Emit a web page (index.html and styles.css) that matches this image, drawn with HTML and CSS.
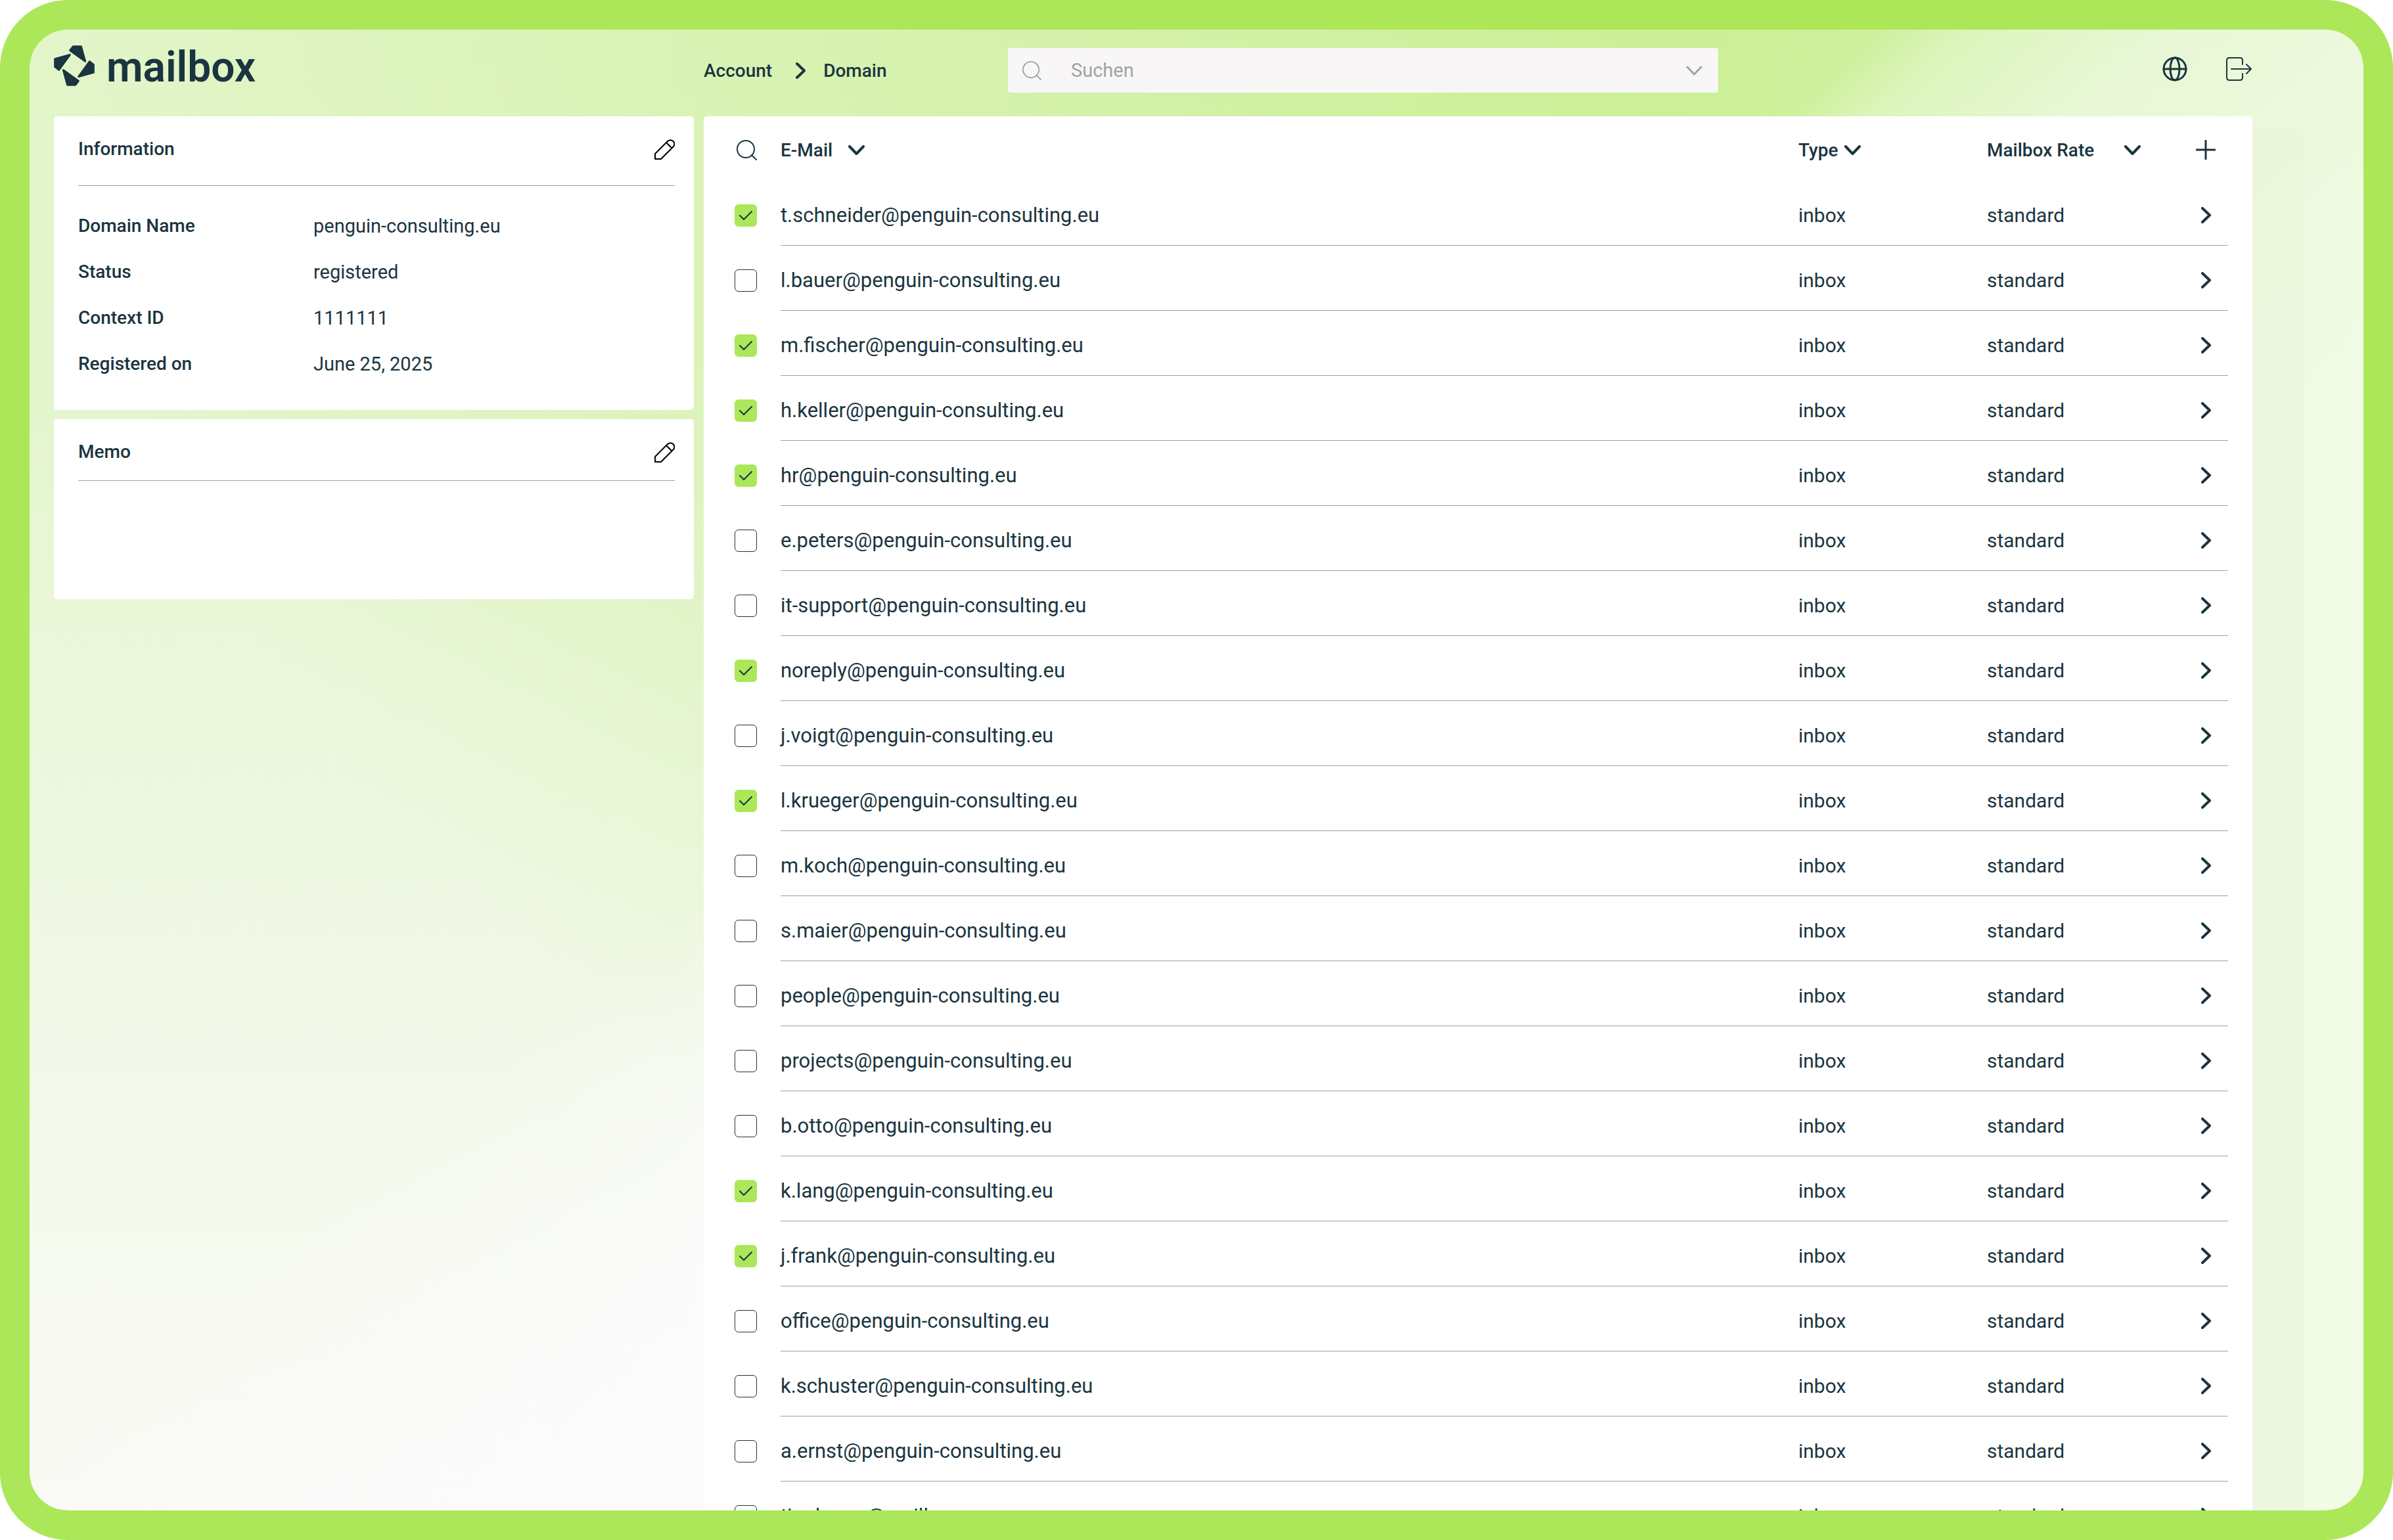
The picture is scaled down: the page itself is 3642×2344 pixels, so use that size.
FILE: index.html
```html
<!DOCTYPE html>
<html lang="de">
<head>
  <meta charset="UTF-8" />
  <meta name="viewport" content="width=device-width, initial-scale=1.0" />
  <title>mailbox - Domain</title>
  <link rel="stylesheet" href="styles.css">
</head>
<body>
  <!-- shared icons -->
  <svg class="sprite" aria-hidden="true">
    <symbol id="i-down" viewBox="0 0 25 15"><path d="M2 2l10.500 11L23 2" /></symbol>
    <symbol id="i-right" viewBox="0 0 16 25"><path d="M2 2l11 10.500L2 23" /></symbol>
    <symbol id="i-search" viewBox="0 0 31 31"><circle cx="14" cy="14" r="13" /><path d="M23 23l7 7" /></symbol>
    <symbol id="i-pencil" viewBox="0 0 31 31"><path d="M1 30v-8L20 3c2.500-2.500 6-2.500 8.500 0s2.500 6 0 8.500L10 30zM18 5l8.500 8.500" /></symbol>
  </svg>

  <div class="frame">
    <header class="topbar">
      <a class="logo" href="#">
        <svg class="logo-mark" viewBox="0 0 186 186" aria-hidden="true">
          <path id="blade" d="M88 5h36l19 68L74 23z" />
          <use href="#blade" transform="rotate(90 93 93)" />
          <use href="#blade" transform="rotate(180 93 93)" />
          <use href="#blade" transform="rotate(270 93 93)" />
        </svg>
        <span>mailbox</span>
      </a>
      <div class="topbar-right">
        <nav class="breadcrumb">
          <a href="#">Account</a>
          <svg class="icon right"><use href="#i-right" /></svg>
          <a href="#">Domain</a>
        </nav>
        <form class="search">
          <svg class="icon glass"><use href="#i-search" /></svg>
          <input type="search" placeholder="Suchen" aria-label="Suchen">
          <button type="button" aria-label="Filter"><svg class="icon down"><use href="#i-down" /></svg></button>
        </form>
        <div class="tools">
          <button type="button" aria-label="Sprache">
            <svg class="icon globe" viewBox="0 0 38 38"><circle cx="19" cy="19" r="17" /><ellipse cx="19" cy="19" rx="7" ry="17" /><path d="M2 19h34" /></svg>
          </button>
          <button type="button" aria-label="Abmelden">
            <svg class="icon logout" viewBox="0 0 40 36"><path d="M25 11V5c0-2.500-1.500-4-4-4H5C2.500 1 1 2.500 1 5v26c0 2.500 1.500 4 4 4h16c2.500 0 4-1.500 4-4v-6" /><path d="M8 18h30M31 11l7 7-7 7" /></svg>
          </button>
        </div>
      </div>
    </header>

    <main class="content">
      <aside class="side">
        <section class="panel info">
          <div class="panel-head">
            <h2>Information</h2>
            <button type="button" aria-label="Information bearbeiten"><svg class="icon pencil"><use href="#i-pencil" /></svg></button>
          </div>
          <dl>
            <dt>Domain Name</dt><dd>penguin-consulting.eu</dd>
            <dt>Status</dt><dd>registered</dd>
            <dt>Context ID</dt><dd>1111111</dd>
            <dt>Registered on</dt><dd>June 25, 2025</dd>
          </dl>
        </section>
        <section class="panel memo">
          <div class="panel-head">
            <h2>Memo</h2>
            <button type="button" aria-label="Memo bearbeiten"><svg class="icon pencil"><use href="#i-pencil" /></svg></button>
          </div>
          <div class="memo-body"></div>
        </section>
      </aside>

      <section class="panel list">
        <table>
          <thead>
            <tr>
              <th class="col-check"><button type="button" aria-label="Suchen"><svg class="icon glass"><use href="#i-search" /></svg></button></th>
              <th><button type="button" class="sort">E-Mail <svg class="icon down"><use href="#i-down" /></svg></button></th>
              <th class="col-type"><button type="button" class="sort tight">Type <svg class="icon down"><use href="#i-down" /></svg></button></th>
              <th class="col-rate"><button type="button" class="sort wide">Mailbox Rate <svg class="icon down"><use href="#i-down" /></svg></button></th>
              <th class="col-open"><button type="button" aria-label="Neue Mailbox"><svg class="icon plus" viewBox="0 0 30 30"><path d="M15 1v28M1 15h28" /></svg></button></th>
            </tr>
          </thead>
          <tbody id="rows"></tbody>
        </table>
      </section>
    </main>
  </div>

  <script>
    const mailboxes = [
      ["t.schneider@penguin-consulting.eu", true],
      ["l.bauer@penguin-consulting.eu", false],
      ["m.fischer@penguin-consulting.eu", true],
      ["h.keller@penguin-consulting.eu", true],
      ["hr@penguin-consulting.eu", true],
      ["e.peters@penguin-consulting.eu", false],
      ["it-support@penguin-consulting.eu", false],
      ["noreply@penguin-consulting.eu", true],
      ["j.voigt@penguin-consulting.eu", false],
      ["l.krueger@penguin-consulting.eu", true],
      ["m.koch@penguin-consulting.eu", false],
      ["s.maier@penguin-consulting.eu", false],
      ["people@penguin-consulting.eu", false],
      ["projects@penguin-consulting.eu", false],
      ["b.otto@penguin-consulting.eu", false],
      ["k.lang@penguin-consulting.eu", true],
      ["j.frank@penguin-consulting.eu", true],
      ["office@penguin-consulting.eu", false],
      ["k.schuster@penguin-consulting.eu", false],
      ["a.ernst@penguin-consulting.eu", false],
      ["tim.bauer@smiller.eu", false]
    ];

    document.getElementById('rows').innerHTML = mailboxes.map(([mail, checked], i) => `
      <tr>
        <td><input type="checkbox" id="box${i}" ${checked ? 'checked' : ''}></td>
        <td class="mail"><label for="box${i}">${mail}</label></td>
        <td>inbox</td>
        <td>standard</td>
        <td class="open"><a href="#" aria-label="${mail}"><svg class="icon right"><use href="#i-right" /></svg></a></td>
      </tr>`).join('');
  </script>
</body>
</html>
```

FILE: styles.css
```css
* {
  margin: 0;
  padding: 0;
  box-sizing: border-box;
}
body {
  font-family: Roboto, sans-serif;
  font-size: 29px;
  color: #1a3540;
  background-color: #fff;
}
a {
  color: inherit;
  text-decoration: none;
}
button {
  display: block;
  background: none;
  border: none;
  font: inherit;
  color: inherit;
  cursor: pointer;
}
.sprite {
  display: none;
}

/* icons */
.icon {
  display: block;
  flex: none;
  fill: none;
  stroke: currentColor;
  stroke-width: 2;
  stroke-linecap: round;
  stroke-linejoin: round;
}
.down {
  width: 25px;
  height: 15px;
  stroke-width: 4;
}
.right {
  width: 16px;
  height: 25px;
  stroke-width: 4;
}
.glass, .pencil {
  width: 31px;
  height: 31px;
}
.pencil {
  color: #000;
}
.globe {
  width: 38px;
  height: 38px;
  stroke-width: 3;
}
.logout {
  width: 40px;
  height: 36px;
}
.plus {
  width: 30px;
  height: 30px;
  stroke-width: 3;
}

.frame {
  height: 100vh;
  overflow: hidden;
  border: 45px solid #abe758;
  border-radius: 103px;
  padding: 0 169px 0 37px;
  background:
    linear-gradient(139deg, transparent 24%, #dcf5bc 27%, #e8f7d5 34%, #eefae0 45%, #f1fbe6 55%) right / 50% 100% no-repeat padding-box,
    linear-gradient(139deg, rgba(251, 251, 252, 0) 58%, #fbfbfc 76%) left / 50% 100% no-repeat padding-box,
    radial-gradient(ellipse 68% 90% at 70% 0%, #cbef96, rgba(203, 239, 150, 0)) padding-box,
    linear-gradient(#e2f5c8, #e4f5cd 25%, #ebf7dc 45%, #f3f9ea 70%, #fafaf5) padding-box,
    #abe758;
}

/* top bar */
.topbar, .content {
  display: grid;
  grid-template-columns: minmax(0, 5fr) minmax(0, 12.1fr);
  column-gap: 15px;
  align-items: start;
}
.topbar {
  padding: 24px 0 36px;
}
.logo {
  display: flex;
  align-items: center;
  gap: 18px;
  height: 62px;
  font-size: 64px;
  font-weight: 600;
}
.logo span {
  padding-top: 4px;
}
.logo-mark {
  width: 62px;
  height: 62px;
  fill: currentColor;
  stroke: currentColor;
  stroke-width: 9;
  stroke-linejoin: round;
}
.topbar-right {
  display: flex;
  align-items: center;
  margin-top: 4px;
}
.breadcrumb {
  display: flex;
  align-items: center;
  width: 463px;
  font-size: 28px;
  font-weight: 500;
}
.breadcrumb .icon {
  margin: 0 26px 0 36px;
}
.search {
  display: flex;
  align-items: center;
  flex: 0 1 1081px;
  height: 68px;
  padding: 0 24px 0 22px;
  border-radius: 4px;
  background-color: #f8f6f7;
  color: #9da5a4;
}
.search .glass {
  width: 29px;
  height: 29px;
}
.search .down {
  stroke-width: 3;
}
.search input {
  flex: 1;
  min-width: 0;
  margin-left: 45px;
  border: none;
  outline: none;
  background: none;
  font: inherit;
  color: #1a3540;
}
.search input::placeholder {
  color: #9da5a4;
}
.tools {
  display: flex;
  align-items: center;
  gap: 59px;
  margin-left: auto;
  padding-bottom: 4px;
}

/* panels */
.side {
  display: grid;
  gap: 14px;
}
.panel {
  border-radius: 5px;
  background-color: #fff;
}
.info, .memo {
  padding: 0 29px 0 37px;
}
.panel-head {
  display: flex;
  align-items: center;
  justify-content: space-between;
  padding: 30px 0 35px;
  border-bottom: 1px solid #9aa2a2;
}
.memo .panel-head {
  padding-bottom: 23px;
}
h2 {
  font-size: 28px;
  font-weight: 500;
  line-height: 40px;
}
dl {
  display: grid;
  grid-template-columns: 358px 1fr;
  padding: 26px 0 35px;
  line-height: 70px;
}
dt {
  font-size: 28px;
  font-weight: 500;
}
.memo-body {
  height: 180px;
}

/* mailbox list */
.list {
  padding: 0 37px 0 47px;
  box-shadow: 79px 19px rgba(232, 241, 216, 0.4);
}
table {
  width: 100%;
  table-layout: fixed;
  border-spacing: 0;
}
th {
  height: 98px;
  padding-top: 4px;
  text-align: left;
  font-size: 28px;
  font-weight: 500;
}
td {
  height: 99px;
  padding-top: 6px;
  border-bottom: 1px solid #9aa2a2;
  font-size: 30px;
}
td:first-child {
  border-bottom: none;
}
.col-check {
  width: 70px;
  padding-left: 3px;
}
.col-type {
  width: 287px;
}
.col-rate {
  width: 318px;
}
.col-open {
  width: 49px;
}
.sort {
  display: flex;
  align-items: center;
  gap: 24px;
}
.sort.tight {
  gap: 10px;
}
.sort.wide {
  gap: 46px;
}
.mail {
  font-size: 31px;
}
.open {
  padding-left: 8px;
}
input[type="checkbox"] {
  display: block;
  appearance: none;
  width: 34px;
  height: 34px;
  border: 1px solid #1a3540;
  border-radius: 6px;
  background-color: #fff;
}
input[type="checkbox"]:checked {
  border-color: #abe758;
  background: #abe758 url("data:image/svg+xml,%3Csvg xmlns='http://www.w3.org/2000/svg' viewBox='0 0 20 14' fill='none' stroke='%231a3540' stroke-width='2' stroke-linecap='round' stroke-linejoin='round'%3E%3Cpath d='M1 7l6 6L19 1'/%3E%3C/svg%3E") center / 20px 14px no-repeat;
}
```
